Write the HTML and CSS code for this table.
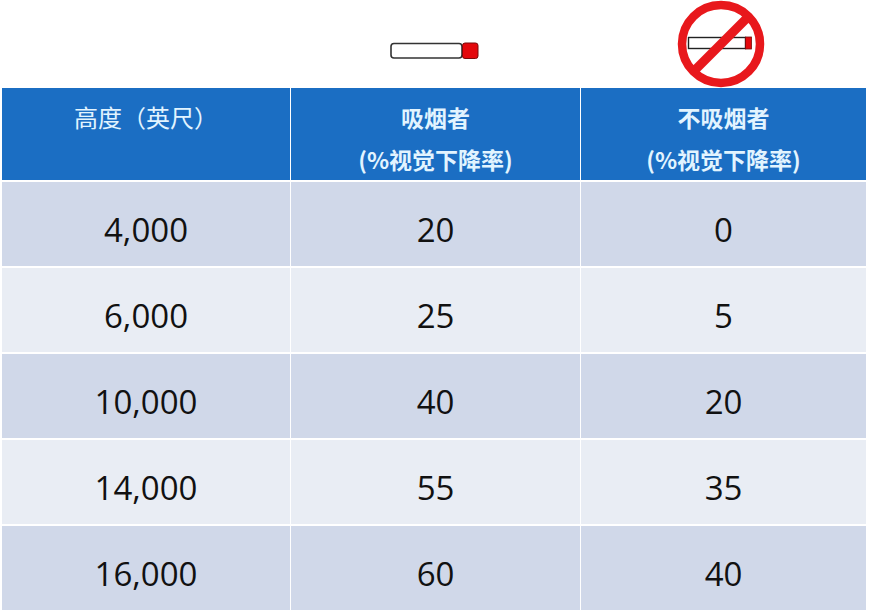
FILE: index.html
```html
<!DOCTYPE html>
<html lang="zh">
<head>
<meta charset="utf-8">
<link rel="stylesheet" href="styles.css">
</head>
<body>
<div class="page">
  <div class="icons">
    <div class="icon-cell"></div>
    <div class="icon-cell">
      <svg class="cig" width="90" height="18" viewBox="0 0 90 18">
        <rect x="1" y="1.5" width="71" height="14.5" rx="3" fill="#fff" stroke="#333" stroke-width="1.6"/>
        <rect x="72.5" y="1" width="15.5" height="15.5" rx="2.5" fill="#e3080c" stroke="#7a0a0a" stroke-width="1"/>
      </svg>
    </div>
    <div class="icon-cell">
      <svg class="nosmoke" width="90" height="88" viewBox="0 0 90 88">
        <circle cx="44" cy="44" r="39" fill="#fff" stroke="#e8181c" stroke-width="8.5"/>
        <rect x="11.5" y="37.5" width="57" height="11" fill="#fff" stroke="#222" stroke-width="1.4"/>
        <rect x="68.5" y="37" width="6" height="12" fill="#e3080c" stroke="#7a0a0a" stroke-width="0.8"/>
        <line x1="71" y1="17" x2="17" y2="71" stroke="#e8181c" stroke-width="9"/>
      </svg>
    </div>
  </div>
  <div class="table">
    <div class="th th-single">高度（英尺）</div>
    <div class="th th-bold">吸烟者<br>(%视觉下降率)</div>
    <div class="th th-bold">不吸烟者<br>(%视觉下降率)</div>

    <div class="td dark">4,000</div><div class="td dark">20</div><div class="td dark">0</div>
    <div class="td light">6,000</div><div class="td light">25</div><div class="td light">5</div>
    <div class="td dark">10,000</div><div class="td dark">40</div><div class="td dark">20</div>
    <div class="td light">14,000</div><div class="td light">55</div><div class="td light">35</div>
    <div class="td dark">16,000</div><div class="td dark">60</div><div class="td dark">40</div>
  </div>
</div>
</body>
</html>
```

FILE: styles.css
```css
html, body {
  margin: 0;
  padding: 0;
  background: #fff;
}
.page {
  width: 870px;
  height: 613px;
  overflow: hidden;
  padding-left: 2px;
  box-sizing: border-box;
}
.icons {
  display: grid;
  grid-template-columns: 288px 289px 285px;
  column-gap: 1px;
  height: 88px;
}
.icon-cell {
  display: flex;
  justify-content: center;
  align-items: flex-start;
}
.cig {
  margin-top: 42px;
  margin-left: -2px;
}
.nosmoke {
  margin-top: 0;
  margin-left: -3px;
}
.table {
  display: grid;
  grid-template-columns: 288px 289px 285px;
  grid-template-rows: 92px repeat(5, 84px);
  column-gap: 1px;
  row-gap: 2px;
}
.th {
  background: #1b6ec3;
  color: #e2f4ff;
  font-family: "Noto Sans CJK SC", "Noto Sans", sans-serif;
  font-size: 23px;
  line-height: 42px;
  text-align: center;
  padding-top: 8px;
  box-sizing: border-box;
}
.th-single {
  font-weight: 400;
  font-size: 24px;
}
.th-bold {
  font-weight: 700;
}
.td {
  display: flex;
  justify-content: center;
  align-items: center;
  padding-top: 11px;
  box-sizing: border-box;
  font-family: "Open Sans", "Liberation Sans", sans-serif;
  font-size: 33px;
  color: #111;
}
.dark {
  background: #d0d8e9;
}
.light {
  background: #e9edf4;
}
```
